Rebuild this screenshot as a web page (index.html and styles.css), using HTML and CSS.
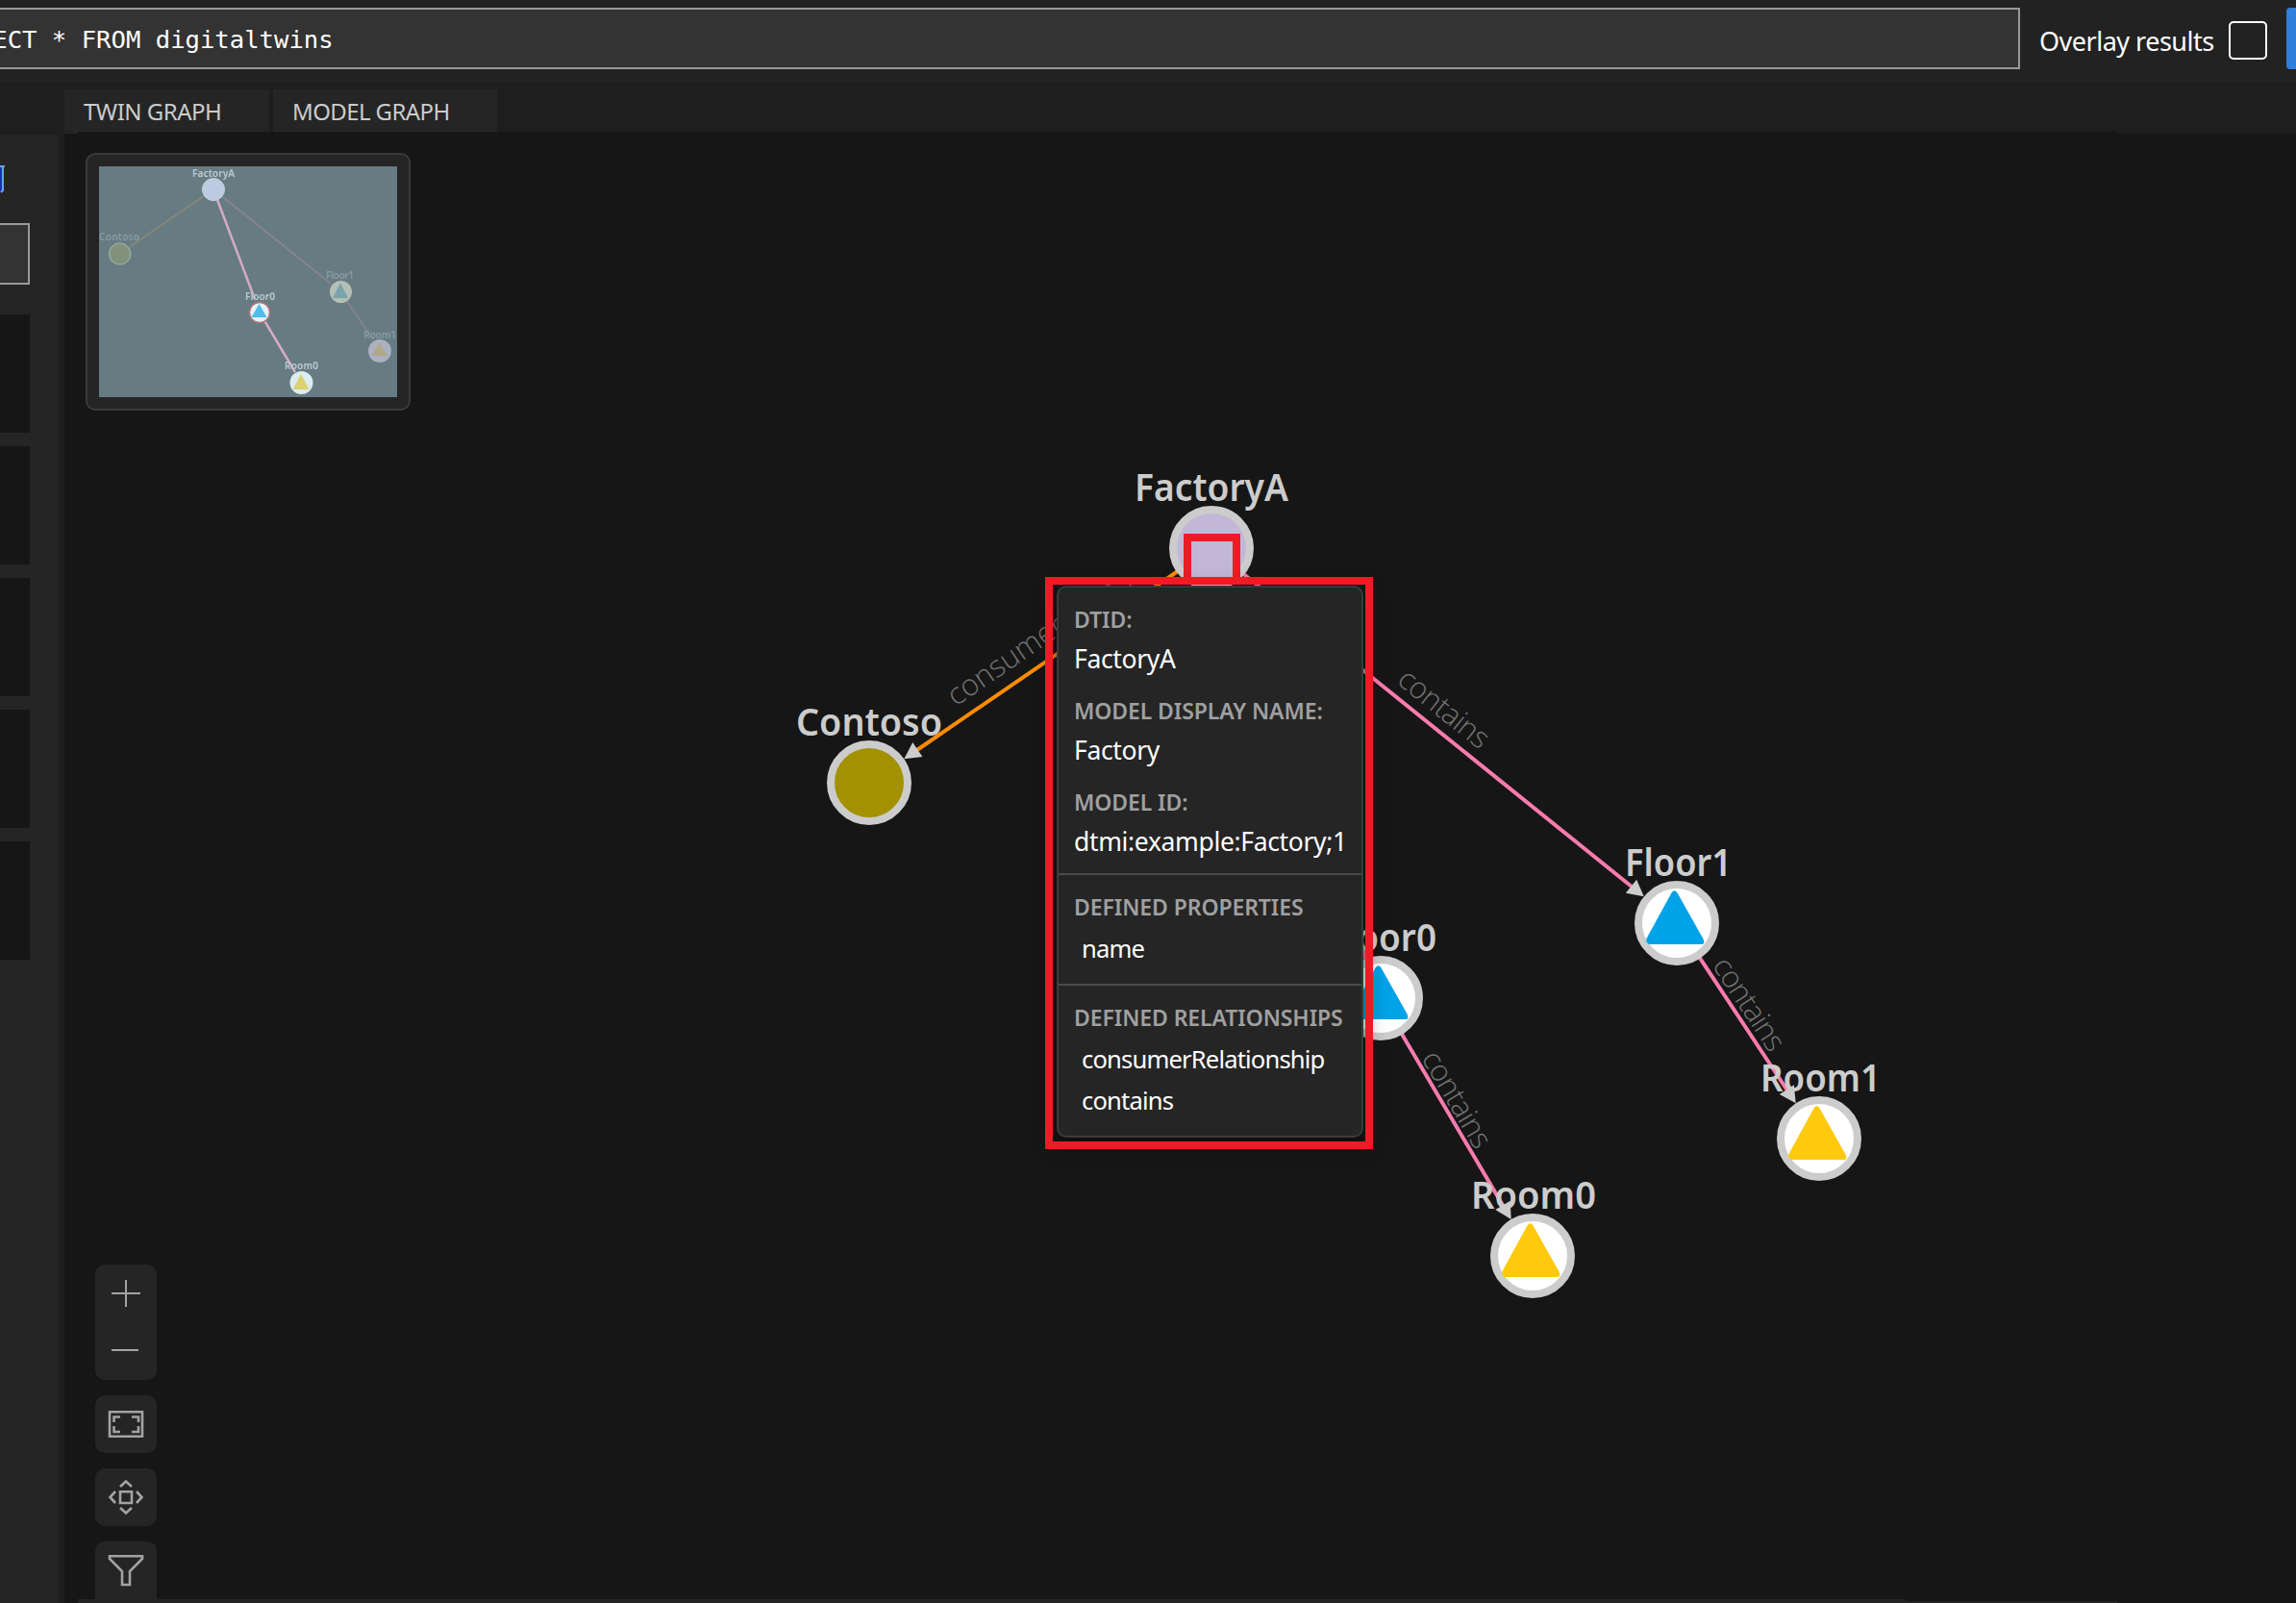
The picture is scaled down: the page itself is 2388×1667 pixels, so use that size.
FILE: index.html
```html
<!DOCTYPE html>
<html lang="en">
<head>
<meta charset="utf-8">
<title>Twin Graph</title>
<link rel="stylesheet" href="styles.css">
</head>
<body>
<header class="query-bar">
  <div class="query-input"><span class="query-text">SELECT * FROM digitaltwins</span></div>
  <span class="overlay-label">Overlay results</span>
  <span class="checkbox"></span>
  <span class="run-button"></span>
</header>
<div class="workspace">
  <aside class="sidebar">
    <svg class="folder-icon" width="6" height="30" viewBox="0 0 6 30"><path d="M0 1H3V27H0Z" fill="#1c2fb4"/><path d="M0 1H5M3 1V26L1 28" fill="none" stroke="#63a5ee" stroke-width="2"/></svg>
    <div class="search-field"></div>
    <div class="model-list">
      <div class="model-item"></div>
      <div class="model-item"></div>
      <div class="model-item"></div>
      <div class="model-item"></div>
      <div class="model-item"></div>
    </div>
  </aside>
  <main class="viewer">
    <nav class="tabs">
      <div class="tab tab-twin"><span>TWIN GRAPH</span></div>
      <div class="tab tab-model"><span>MODEL GRAPH</span></div>
    </nav>
    <section class="canvas">
      <div class="canvas-top"></div>
      <svg class="graph" width="2321" height="1528" viewBox="67 139 2321 1528">
        <defs>
          <path id="tri" d="M-5.5 -31.5Q-2.5 -36 .5 -31.5L27.5 16.5Q30 22 25.5 22H-29Q-33 19 -31.5 16Z"/>
          <path id="arrow" d="M-44 0L-61 -9V9Z" fill="#ccc"/>
        </defs>
        <g fill="none" stroke-width="4">
          <path d="M1260 570L953 780.5" stroke="#ff8c00"/>
          <path d="M1260 570L1697 922M1260 570L1436 1038M1436 1038L1564 1255M1744 960L1859 1134" stroke="#fb7bad"/>
        </g>
        <g class="node-label">
          <text x="1180" y="521" textLength="160" lengthAdjust="spacingAndGlyphs">FactoryA</text>
          <text x="828" y="765" textLength="152" lengthAdjust="spacingAndGlyphs">Contoso</text>
          <text x="1690" y="911" textLength="111" lengthAdjust="spacingAndGlyphs">Floor1</text>
          <text x="1381" y="989" textLength="113" lengthAdjust="spacingAndGlyphs">Floor0</text>
          <text x="1530" y="1257" textLength="130" lengthAdjust="spacingAndGlyphs">Room0</text>
          <text x="1831" y="1135" textLength="125" lengthAdjust="spacingAndGlyphs">Room1</text>
        </g>
        <use href="#arrow" transform="translate(904 814) rotate(145.6)"/>
        <use href="#arrow" transform="translate(1744 960) rotate(38.9)"/>
        <use href="#arrow" transform="translate(1594 1306) rotate(59.5)"/>
        <use href="#arrow" transform="translate(1892 1184) rotate(56.5)"/>
        <g class="edge-label">
          <text transform="translate(994 735) rotate(-34.4)">consumerRelat…</text>
          <text transform="translate(1501 738) rotate(38.9)" y="9" text-anchor="middle" textLength="112">contains</text>
          <text transform="translate(1514 1144) rotate(59.5)" y="9" text-anchor="middle" textLength="112">contains</text>
          <text transform="translate(1818 1045) rotate(56.5)" y="9" text-anchor="middle" textLength="110">contains</text>
        </g>
        <g stroke="#ccc" stroke-width="8">
          <circle cx="1260" cy="570" r="40" fill="#c3b7d8"/>
          <circle cx="904" cy="814" r="40" fill="#a39100"/>
          <circle cx="1744" cy="960" r="40" fill="#fff"/>
          <circle cx="1436" cy="1038" r="40" fill="#fff"/>
          <circle cx="1594" cy="1306" r="40" fill="#fff"/>
          <circle cx="1892" cy="1184" r="40" fill="#fff"/>
        </g>
        <use href="#tri" x="1744" y="960" fill="#00a2e8"/>
        <use href="#tri" x="1436" y="1038" fill="#00a2e8"/>
        <use href="#tri" x="1594" y="1306" fill="#ffc90e"/>
        <use href="#tri" x="1892" y="1184" fill="#ffc90e"/>
      </svg>

      <div class="minimap">
        <svg width="310" height="240" viewBox="103 173 310 240">
          <rect x="103" y="173" width="310" height="240" fill="#667b82"/>
          <g fill="none" stroke-width="2.200">
            <path d="M222 197L136 256" stroke="#82857b"/>
            <path d="M222 197L344 295M354 303L388 353" stroke="#848390"/>
            <path d="M222 197L265 311M270 325L307 387" stroke="#d3a9c6" stroke-width="2.600"/>
          </g>
          <g class="mini-label mini-dim">
            <text x="103" y="250" textLength="42">Contoso</text>
            <text x="339" y="290" textLength="29">Floor1</text>
            <text x="378" y="352" textLength="34">Room1</text>
          </g>
          <g class="mini-label">
            <text x="200" y="184" textLength="44">FactoryA</text>
            <text x="255" y="312" textLength="31">Floor0</text>
            <text x="296" y="384" textLength="35">Room0</text>
          </g>
          <circle cx="222" cy="197" r="11.5" fill="#bccbe2" stroke="#c4d5dc"/>
          <circle cx="124.700" cy="264" r="11" fill="#82927a" stroke="#92a79a" stroke-width="1.500"/>
          <circle cx="354.500" cy="303.500" r="11.500" fill="#b6bfb6"/>
          <circle cx="270" cy="325" r="10.500" fill="#e3f1f6" stroke="#b0747c" stroke-width="1.500"/>
          <circle cx="313.500" cy="398" r="12" fill="#dcecf1"/>
          <circle cx="395" cy="365" r="12" fill="#abb1c0"/>
          <path d="M354 294L362 310H346Z" fill="#78a4ab"/>
          <path d="M269.500 316L277.500 330H261.500Z" fill="#4fbce9"/>
          <path d="M313 389L321.500 405H304.500Z" fill="#dbd16d"/>
          <path d="M394.500 356L403 370H386.500Z" fill="#b1a888"/>
        </svg>
      </div>

      <div class="toolbar">
        <div class="tool-group">
          <svg width="64" height="120" viewBox="0 0 64 120"><path d="M17 30H47M32 16V44M17 89H45" stroke="#a3a3a3" stroke-width="2"/></svg>
        </div>
        <div class="tool-button">
          <svg width="64" height="60" viewBox="0 0 64 60" fill="none" stroke="#a3a3a3" stroke-width="2.600"><path d="M15 17.200H49V42.800H15Z"/><path d="M19.500 28V22.500H26M38 22.500H45V28M45 32V38H38M26 38H19.500V32"/></svg>
        </div>
        <div class="tool-button">
          <svg width="64" height="60" viewBox="0 0 64 60" fill="none" stroke="#a3a3a3" stroke-width="2.600"><path d="M26 24.200H38V36H26ZM26 19L32 13.500L38 19M26 41L32 46.500L38 41M21 24L15.500 30L21 36M43 24L48.500 30L43 36"/></svg>
        </div>
        <div class="tool-button tool-last">
          <svg width="64" height="60" viewBox="0 0 64 60" fill="none" stroke="#a3a3a3" stroke-width="2.600"><path d="M15 15.200H49V18L36 31V45H28V31L15 18Z"/></svg>
        </div>
      </div>
      <div class="bottom-strip"></div>
      <div class="bottom-strip bottom-strip-thin"></div>

      <div class="node-marker"></div>
      <div class="tooltip">
        <section class="tip-main">
          <h4 class="tip-title">DTID:</h4>
          <p class="tip-value">FactoryA</p>
          <h4 class="tip-title">MODEL DISPLAY NAME:</h4>
          <p class="tip-value">Factory</p>
          <h4 class="tip-title">MODEL ID:</h4>
          <p class="tip-value">dtmi:example:Factory;1</p>
        </section>
        <section class="tip-section">
          <h4 class="tip-title">DEFINED PROPERTIES</h4>
          <p class="tip-item">name</p>
        </section>
        <section class="tip-section">
          <h4 class="tip-title">DEFINED RELATIONSHIPS</h4>
          <p class="tip-item">consumerRelationship</p>
          <p class="tip-item">contains</p>
        </section>
      </div>
      <div class="tooltip-marker"></div>
    </section>
  </main>
</div>
</body>
</html>
```
FILE: styles.css
```css
* { box-sizing: border-box; }
body {
  margin: 0;
  width: 2388px;
  height: 1667px;
  overflow: hidden;
  display: flex;
  flex-direction: column;
  background: #1e1e1e;
  color: #fff;
  font-family: "Noto Sans", "Open Sans", sans-serif;
}
svg { display: block; }
h4, p { margin: 0; }

.query-bar {
  display: flex;
  align-items: flex-start;
  flex: none;
  height: 86px;
  padding-top: 8px;
  background: #222;
}
.query-input {
  flex: none;
  width: 2101px;
  height: 64px;
  border: 2px solid #999;
  border-left: 0;
  background: #333;
  overflow: hidden;
}
.query-text {
  display: block;
  margin-left: -54px;
  font: 25.6px/62px "DejaVu Sans Mono", monospace;
  white-space: pre;
}
.overlay-label {
  flex: none;
  width: 197px;
  margin-left: 20px;
  font-size: 27px;
  line-height: 70px;
  letter-spacing: -0.5px;
  white-space: nowrap;
}
.checkbox {
  flex: none;
  width: 40px;
  height: 40px;
  margin-top: 14px;
  border: 2px solid #fff;
  border-radius: 5px;
}
.run-button {
  flex: none;
  width: 40px;
  height: 64px;
  margin-left: 20px;
  border-radius: 4px;
  background: #2f7fdb;
}

.workspace { display: flex; flex: 1; }
.sidebar {
  flex: none;
  width: 61px;
  margin-top: 54px;
  padding-top: 32px;
  background: #252525;
}
.search-field {
  width: 31px;
  height: 64px;
  margin-top: 30px;
  border: 2px solid #999;
  border-left: 0;
  background: #333;
}
.model-list {
  display: flex;
  flex-direction: column;
  gap: 14px;
  margin-top: 31px;
}
.model-item { width: 31px; height: 123px; background: #161616; }

.viewer {
  display: flex;
  flex-direction: column;
  flex: 1;
  margin-left: 6px;
}
.tabs {
  display: flex;
  gap: 4px;
  flex: none;
  height: 53px;
  padding-top: 7px;
}
.tab {
  background: #252525;
  color: #ccc;
  font-size: 24px;
  line-height: 46px;
  white-space: nowrap;
}
.tab-twin { width: 213px; padding-left: 20px; letter-spacing: -0.5px; }
.tab-model { width: 233px; padding-left: 20px; letter-spacing: -0.6px; }

.canvas { position: relative; flex: 1; background: #161616; }
.canvas-top {
  position: absolute;
  left: 14px;
  top: -2px;
  width: 2121px;
  height: 2px;
  background: #161616;
}
.graph { position: absolute; left: 0; top: 0; }
.node-label { font-size: 39px; font-weight: 600; fill: #ccc; }
.edge-label { font-family: "Open Sans", sans-serif; font-size: 31px; font-weight: 300; fill: #727272; }

.minimap {
  position: absolute;
  left: 22px;
  top: 20px;
  width: 338px;
  height: 268px;
  padding: 12px;
  border: 2px solid #3a3a3a;
  border-radius: 10px;
  background: #252525;
}
.mini-label { font-size: 10px; font-weight: 600; fill: #bccbd0; }
.mini-dim { fill: #8a9ca2; }

.toolbar {
  position: absolute;
  left: 32px;
  top: 1176px;
  display: flex;
  flex-direction: column;
  gap: 16px;
}
.tool-group, .tool-button { border-radius: 10px; background: #252525; }
.tool-group { height: 120px; }
.tool-button { height: 60px; }
.tool-last { border-radius: 10px 10px 0 0; }
.bottom-strip {
  position: absolute;
  left: 14px;
  bottom: 0;
  width: 1901px;
  height: 4px;
  background: #252425;
}
.bottom-strip-thin { left: 1915px; width: 220px; height: 2px; }

.node-marker {
  position: absolute;
  left: 1164px;
  top: 416px;
  width: 59px;
  height: 50px;
  border: 8px solid #ed1c24;
  border-bottom: 0;
}
.tooltip-marker {
  position: absolute;
  left: 1020px;
  top: 461px;
  width: 341px;
  height: 595px;
  border: 8px solid #ed1c24;
}
.tooltip {
  position: absolute;
  left: 1032px;
  top: 470px;
  width: 319px;
  height: 574px;
  border: 2px solid #3b3b3b;
  border-radius: 10px;
  background: #252525;
  box-shadow: 0 6px 22px rgba(0, 0, 0, .55);
  white-space: nowrap;
}
.tip-main { height: 297px; padding: 13px 0 0 16px; }
.tip-title {
  height: 40px;
  font-size: 23px;
  font-weight: 600;
  line-height: 40px;
  letter-spacing: -0.1px;
  color: #a0a0a0;
}
.tip-value {
  height: 55px;
  font-size: 26.5px;
  line-height: 43px;
  letter-spacing: -0.35px;
}
.tip-section {
  height: 115px;
  padding: 13px 0 0 16px;
  border-top: 2px solid #4a4a4e;
}
.tip-item {
  height: 43px;
  padding-left: 8px;
  font-size: 25.6px;
  line-height: 48px;
  letter-spacing: -0.85px;
}
```
